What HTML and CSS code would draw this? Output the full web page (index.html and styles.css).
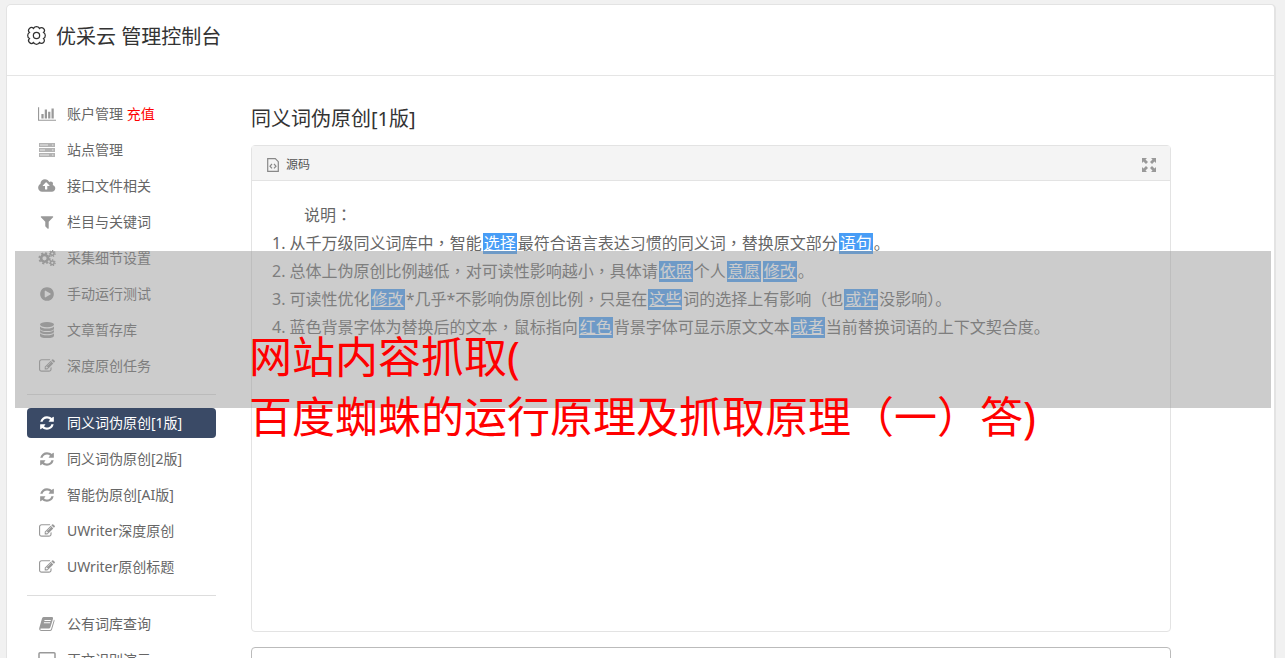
FILE: index.html
```
<!DOCTYPE html>
<html lang="zh-CN">
<head>
<meta charset="utf-8">
<title>优采云 管理控制台</title>
<link rel="stylesheet" href="styles.css">
</head>
<body>
<svg class="sprite" aria-hidden="true">
  <symbol id="chart" viewBox="0 0 2048 1792"><path d="M640 896v512h-256v-512h256zm384-512v1024h-256v-1024h256zm1024 1152v128h-2048v-1536h128v1408h1920zm-640-896v768h-256v-768h256zm384-384v1152h-256v-1152h256z"/></symbol>
  <symbol id="server" viewBox="0 0 18 16"><path fill-opacity=".75" d="M1 1h16v4H1zM1 6h16v4H1zM1 11h16v4H1z"/><path fill="#fff" fill-opacity=".7" d="M2 2.500h8v1H2zM14 2.500h1.500v1H14zM2 7.500h5v1H2zM14 7.500h1.500v1H14zM2 12.500h9v1H2zM14 12.500h1.500v1H14z"/></symbol>
  <symbol id="cloud" viewBox="0 0 1856 1792"><path d="M1216 864q0-14-9-23l-352-352q-9-9-23-9t-23 9l-351 351q-10 12-10 24 0 14 9 23t23 9h224v352q0 13 9.500 22.500t22.500 9.500h192q13 0 22.500-9.500t9.500-22.500v-352h224q13 0 22.500-9.500t9.500-22.500zm640 288q0 159-112.500 271.500t-271.500 112.500h-1088q-185 0-316.500-131.500t-131.500-316.500q0-130 70-240t188-165q-2-30-2-43 0-212 150-362t362-150q156 0 285.500 87t188.500 231q71-62 166-62 106 0 181 75t75 181q0 76-41 138 130 31 213.500 135.500t83.500 238.500z"/></symbol>
  <symbol id="filter" viewBox="0 0 1792 1792"><path d="M1595 295q17 41-14 70l-493 493v742q0 42-39 59-13 5-25 5-27 0-45-19l-256-256q-19-19-19-45v-486l-493-493q-31-29-14-70 17-39 59-39h1280q42 0 59 39z"/></symbol>
  <symbol id="cogs" viewBox="0 0 18 16"><g fill="none" stroke="currentColor"><circle cx="6.500" cy="8.300" r="3.400" stroke-width="2.600"/><circle cx="6.500" cy="8.300" r="5.200" stroke-width="1.800" stroke-dasharray="2.100 1.984"/><circle cx="14.300" cy="3.500" r="1.800" stroke-width="1.400"/><circle cx="14.300" cy="3.500" r="2.900" stroke-width="1.200" stroke-dasharray="1.300 1.300"/><circle cx="14.300" cy="12.800" r="1.800" stroke-width="1.400"/><circle cx="14.300" cy="12.800" r="2.900" stroke-width="1.200" stroke-dasharray="1.300 1.300"/></g></symbol>
  <symbol id="play" viewBox="0 0 1792 1792"><path d="M896 128q209 0 385.500 103t279.500 279.500 103 385.500-103 385.500-279.500 279.500-385.500 103-385.500-103-279.500-279.500-103-385.500 103-385.500 279.500-279.500 385.500-103zm384 823q32-18 32-55t-32-55l-544-320q-31-19-64-1-32 19-32 56v640q0 37 32 56 16 8 32 8 17 0 32-9z"/></symbol>
  <symbol id="database" viewBox="0 0 18 16"><ellipse cx="9" cy="2.600" rx="7" ry="2.600"/><path d="M2 4.400q2 2 7 2t7-2v2q0 2.600-7 2.600t-7-2.600zM2 7.900q2 2 7 2t7-2v1.700q0 2.600-7 2.600t-7-2.600zM2 11.200q2 2 7 2t7-2v2.200q0 2.600-7 2.600t-7-2.600z"/></symbol>
  <symbol id="edit" viewBox="0 0 1792 1792"><path d="M888 1184l116-116-152-152-116 116v56h96v96h56zm440-720q-16-16-33 1l-350 350q-17 17-1 33t33-1l350-350q17-17 1-33zm80 594v190q0 119-84.500 203.500t-203.500 84.500h-832q-119 0-203.500-84.500t-84.500-203.500v-832q0-119 84.500-203.500t203.500-84.500h832q63 0 117 25 15 7 18 23 3 17-9 29l-49 49q-14 14-32 8-23-6-45-6h-832q-66 0-113 47t-47 113v832q0 66 47 113t113 47h832q66 0 113-47t47-113v-126q0-13 9-22l64-64q15-15 35-7t20 29zm-96-738l288 288-672 672h-288v-288zm444 132l-92 92-288-288 92-92q28-28 68-28t68 28l152 152q28 28 28 68t-28 68z"/></symbol>
  <symbol id="refresh" viewBox="0 0 1792 1792"><path d="M1639 1056q0 5-1 7-64 268-268 434.500t-478 166.500q-146 0-282.500-55t-243.500-157l-129 129q-19 19-45 19t-45-19-19-45v-448q0-26 19-45t45-19h448q26 0 45 19t19 45-19 45l-137 137q71 66 161 102t187 36q134 0 250-65t186-179q11-17 53-117 8-23 30-23h192q13 0 22.500 9.500t9.500 22.500zm25-800v448q0 26-19 45t-45 19h-448q-26 0-45-19t-19-45 19-45l138-138q-148-137-349-137-134 0-250 65t-186 179q-11 17-53 117-8 23-30 23h-199q-13 0-22.500-9.500t-9.500-22.500v-7q65-268 270-434.500t480-166.500q146 0 284 55.500t245 156.500l130-129q19-19 45-19t45 19 19 45z"/></symbol>
  <symbol id="book" viewBox="0 0 18 16"><path fill-rule="evenodd" d="M5.500 1H14q1.500 0 1 1.700l-2.600 8.600q-.4 1.200-1.700 1.200H3q-1 .2-.6 1 .3.500 1.200.5H12q.8 0 1.100-.9L16 3.500q.8.600.5 1.600L14 13.500Q13.400 15 12 15H3.500Q1 15 1.200 12.300L4 2.500Q4.300 1 5.500 1zM6.600 4l-.3 1H12.600l.3-1zM6 6.300l-.3 1H12l.3-1z"/></symbol>
  <symbol id="monitor" viewBox="0 0 18 16"><path fill="none" stroke="currentColor" stroke-width="1.500" d="M2 .8h14q1 0 1 1v9q0 1-1 1H2q-1 0-1-1v-9q0-1 1-1zM9 12v3M5 15h8"/></symbol>
  <symbol id="gear" viewBox="0 0 20 20"><g fill="none" stroke="currentColor" stroke-width="1.300"><circle cx="10" cy="10" r="3.300"/><path d="M17.400 13.100A2.700 2.700 0 0 1 13.100 17.400A3.500 3.500 0 0 1 6.900 17.400A2.700 2.700 0 0 1 2.600 13.100A3.500 3.500 0 0 1 2.600 6.900A2.700 2.700 0 0 1 6.900 2.600A3.500 3.500 0 0 1 13.100 2.600A2.700 2.700 0 0 1 17.400 6.900A3.500 3.500 0 0 1 17.400 13.100Z"/></g></symbol>
  <symbol id="source" viewBox="0 0 12 14"><path fill="none" stroke="currentColor" stroke-width="1.200" d="M.7.700h7.600l3 3v9.600H.7zM5 6L3 8.200l2 2.200M7 6l2 2.200-2 2.200"/></symbol>
  <symbol id="expand" viewBox="0 0 14 14"><path d="M0 0h5L3.500 1.500 6 4 4 6 1.500 3.500 0 5zM14 0v5l-1.500-1.500L10 6 8 4l2.500-2.500L9 0zM0 14V9l1.500 1.500L4 8l2 2-2.500 2.500L5 14zM14 14H9l1.500-1.500L8 10l2-2 2.500 2.500L14 9z"/></symbol>
</svg>
<div class="panel">
  <header class="topbar">
    <svg class="gear"><use href="#gear"/></svg>
    <h1 class="title">优采云 管理控制台</h1>
  </header>
  <div class="layout">
    <nav class="menu">
      <a class="item" href="#"><svg class="icon"><use href="#chart"/></svg><span>账户管理 <span class="recharge">充值</span></span></a>
      <a class="item" href="#"><svg class="icon"><use href="#server"/></svg>站点管理</a>
      <a class="item" href="#"><svg class="icon"><use href="#cloud"/></svg>接口文件相关</a>
      <a class="item" href="#"><svg class="icon"><use href="#filter"/></svg>栏目与关键词</a>
      <a class="item" href="#"><svg class="icon"><use href="#cogs"/></svg>采集细节设置</a>
      <a class="item" href="#"><svg class="icon"><use href="#play"/></svg>手动运行测试</a>
      <a class="item" href="#"><svg class="icon"><use href="#database"/></svg>文章暂存库</a>
      <a class="item" href="#"><svg class="icon"><use href="#edit"/></svg>深度原创任务</a>
      <hr class="divider">
      <a class="item active" href="#"><svg class="icon"><use href="#refresh"/></svg>同义词伪原创[1版]</a>
      <a class="item" href="#"><svg class="icon"><use href="#refresh"/></svg>同义词伪原创[2版]</a>
      <a class="item" href="#"><svg class="icon"><use href="#refresh"/></svg>智能伪原创[AI版]</a>
      <a class="item" href="#"><svg class="icon"><use href="#edit"/></svg>UWriter深度原创</a>
      <a class="item" href="#"><svg class="icon"><use href="#edit"/></svg>UWriter原创标题</a>
      <hr class="divider">
      <a class="item" href="#"><svg class="icon"><use href="#book"/></svg>公有词库查询</a>
      <a class="item" href="#"><svg class="icon"><use href="#monitor"/></svg>正文识别演示</a>
    </nav>
    <main class="main">
      <h2 class="heading">同义词伪原创[1版]</h2>
      <section class="editor">
        <div class="toolbar">
          <button class="tool" type="button"><svg class="source"><use href="#source"/></svg>源码</button>
          <button class="tool" type="button" aria-label="全屏"><svg class="expand"><use href="#expand"/></svg></button>
        </div>
        <div class="content">
          <p class="lead">说明<span class="mark" lang="zh-TW">：</span></p>
          <p>1. 从千万级同义词库中<span class="mark" lang="zh-TW">，</span>智能<a class="word" href="#">选择</a>最符合语言表达习惯的同义词<span class="mark" lang="zh-TW">，</span>替换原文部分<a class="word" href="#">语句</a>。</p>
          <p>2. 总体上伪原创比例越低<span class="mark" lang="zh-TW">，</span>对可读性影响越小<span class="mark" lang="zh-TW">，</span>具体请<a class="word" href="#">依照</a>个人<a class="word" href="#">意愿</a><a class="word" href="#">修改</a>。</p>
          <p>3. 可读性优化<a class="word" href="#">修改</a>*几乎*不影响伪原创比例<span class="mark" lang="zh-TW">，</span>只是在<a class="word" href="#">这些</a>词的选择上有影响（也<a class="word" href="#">或许</a>没影响）。</p>
          <p>4. 蓝色背景字体为替换后的文本<span class="mark" lang="zh-TW">，</span>鼠标指向<a class="word" href="#">红色</a>背景字体可显示原文文本<a class="word" href="#">或者</a>当前替换词语的上下文契合度。</p>
        </div>
      </section>
      <textarea class="box" aria-label="原文"></textarea>
    </main>
  </div>
</div>
<div class="banner">网站内容抓取(<br>百度蜘蛛的运行原理及抓取原理（一）答)</div>
</body>
</html>
```
FILE: styles.css
```
* { box-sizing: border-box; }
html { height: 100%; overflow: hidden; }
body {
  margin: 0;
  padding: 4px 9px 0 6px;
  background: #f1f1f1;
  color: #666;
  font-family: "Noto Sans", "Noto Sans CJK SC", sans-serif;
  font-weight: 400;
  font-size: 14px;
}
h1, h2, p { margin: 0; font-weight: 400; }
a { color: inherit; text-decoration: none; }
svg { display: block; fill: currentColor; flex: none; }
.sprite { position: absolute; width: 0; height: 0; }
.panel {
  background: #fff;
  border: 1px solid #e3e3e3;
  border-right-width: 2px;
  border-radius: 5px;
}
.topbar {
  display: flex;
  align-items: center;
  gap: 10px;
  padding: 17px 20px 24px;
  border-bottom: 1px solid #e5e5e5;
  color: #333;
}
.gear { width: 19px; height: 19px; margin-bottom: 3px; }
.title { font-size: 20px; line-height: 29px; }
.layout {
  display: grid;
  grid-template-columns: 189px minmax(0, 1fr);
  gap: 35px;
  padding: 23px 103px 40px 20px;
}
.menu { display: flex; flex-direction: column; gap: 6px; }
.item {
  display: flex;
  align-items: center;
  gap: 11px;
  height: 30px;
  padding: 0 0 2px 11px;
  border-radius: 4px;
  white-space: nowrap;
}
.icon { width: 18px; height: 16px; margin-top: 2px; color: #999; }
.recharge { color: #f00; }
.active, .active .icon { color: #fff; }
.active { background: #3a4a66; }
.divider {
  width: 100%;
  margin: 7px 0;
  border: 0;
  border-top: 1px solid #ddd;
}
.heading { margin: 5px 0 12px; font-size: 20px; line-height: 29px; color: #333; }
.editor { border: 1px solid #e3e3e3; border-radius: 4px; min-height: 487px; }
.toolbar {
  display: flex;
  justify-content: space-between;
  height: 35px;
  padding: 1px 14px 0 15px;
  background: #f4f4f4;
  border-bottom: 1px solid #e3e3e3;
}
.tool {
  display: flex;
  align-items: center;
  gap: 7px;
  padding: 0;
  border: 0;
  background: none;
  color: #555;
  font: inherit;
  font-size: 12px;
}
.source { width: 12px; height: 14px; margin-top: 2px; color: #888; }
.expand { width: 14px; height: 14px; margin-top: 2px; color: #999; }
.content { padding: 20px; font-size: 16px; line-height: 28px; }
.lead { text-indent: 2em; }
.mark { font-family: "Noto Sans CJK TC", sans-serif; line-height: 1; }
.word {
  display: inline-block;
  margin: 0 1px;
  padding: 0 1px;
  background: #489df6;
  color: #fff;
  line-height: 21px;
  text-decoration: underline;
}
.box {
  display: block;
  width: 100%;
  height: 120px;
  margin-top: 15px;
  border: 1px solid #bbb;
  border-radius: 4px;
  resize: none;
}
.banner {
  position: absolute;
  top: 251px;
  left: 15px;
  right: 14px;
  height: 157px;
  padding: 76px 0 0 234px;
  background: rgba(150, 150, 150, 0.49);
  color: #f00;
  font-size: 43px;
  line-height: 60px;
  white-space: nowrap;
  pointer-events: none;
}
```
